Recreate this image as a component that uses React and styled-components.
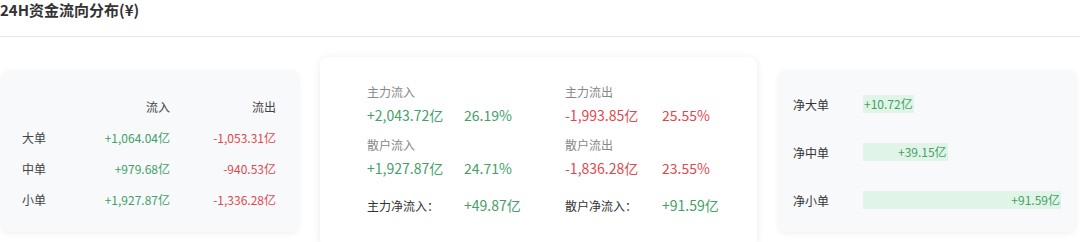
import React from 'react';
import styled, { createGlobalStyle } from 'styled-components';

const GREEN = '#43a066';
const RED = '#e0484e';

const GlobalStyle = createGlobalStyle`
  body {
    margin: 0;
    background: #fff;
    font-family: "Noto Sans CJK SC", "Noto Sans", sans-serif;
    color: #333;
  }
`;

const Page = styled.div`
  width: 1080px;
  height: 242px;
  overflow: hidden;
`;

const Title = styled.h2`
  margin: 0;
  height: 36px;
  font-size: 15px;
  font-weight: 700;
  line-height: 20px;
  color: #333;
  border-bottom: 1px solid #e6e6e6;
`;

const Panels = styled.div`
  display: flex;
  align-items: flex-start;
  gap: 22px;
  padding: 20px 5px 0 2px;
`;

const SideCard = styled.section`
  flex: 0 0 296px;
  height: 161px;
  box-sizing: border-box;
  margin-top: 14px;
  background: #f7f9fb;
  border-radius: 6px;
  box-shadow: 0 1px 6px rgba(0, 0, 0, 0.07);
`;

const OrderTable = styled.div`
  display: grid;
  grid-template-columns: 48px 100px 106px;
  grid-auto-rows: 31px;
  align-items: center;
  padding: 20px 0 0 20px;
  font-size: 12px;
`;

const Cell = styled.span`
  text-align: ${p => (p.$right ? 'right' : 'left')};
  color: ${p => p.$color || '#444'};
`;

const MainCard = styled.section`
  flex: 1 1 0;
  min-width: 0;
  height: 190px;
  box-sizing: border-box;
  padding: 26px 0 0 47px;
  background: #fff;
  border-radius: 8px;
  box-shadow: 0 1px 8px rgba(0, 0, 0, 0.08);
`;

const FlowGrid = styled.div`
  display: grid;
  grid-template-columns: 198px 198px;
`;

const FlowBlock = styled.div`
  margin-bottom: 11px;
`;

const FlowLabel = styled.div`
  font-size: 12px;
  line-height: 18px;
  color: #888;
`;

const FlowValues = styled.div`
  display: flex;
  font-size: 14px;
  line-height: 20px;
  margin-top: 4px;
  color: ${p => p.$color};
`;

const Amount = styled.span`
  width: 97px;
`;

const NetRow = styled.div`
  display: flex;
  align-items: center;
  margin-top: 6px;
  height: 20px;
`;

const NetLabel = styled.span`
  width: 97px;
  font-size: 12px;
  color: #333;
`;

const NetValue = styled.span`
  font-size: 14px;
  color: ${GREEN};
`;

const BarList = styled.div`
  padding: 9px 14px 0 14px;
`;

const BarRow = styled.div`
  display: flex;
  align-items: center;
  height: 48px;
`;

const BarLabel = styled.span`
  width: 70px;
  font-size: 12px;
  color: #333;
`;

const Track = styled.div`
  flex: 1;
`;

const Bar = styled.div`
  min-width: max-content;
  height: 18px;
  line-height: 18px;
  padding: 0 1px;
  box-sizing: border-box;
  text-align: right;
  font-size: 12px;
  color: ${GREEN};
  background: #e0f5e8;
`;

const orders = [
  { name: '大单', inflow: '+1,064.04亿', outflow: '-1,053.31亿' },
  { name: '中单', inflow: '+979.68亿', outflow: '-940.53亿' },
  { name: '小单', inflow: '+1,927.87亿', outflow: '-1,336.28亿' },
];

const flows = [
  { label: '主力流入', amount: '+2,043.72亿', pct: '26.19%', color: GREEN },
  { label: '主力流出', amount: '-1,993.85亿', pct: '25.55%', color: RED },
  { label: '散户流入', amount: '+1,927.87亿', pct: '24.71%', color: GREEN },
  { label: '散户流出', amount: '-1,836.28亿', pct: '23.55%', color: RED },
];

const nets = [
  { label: '净大单', value: 10.72 },
  { label: '净中单', value: 39.15 },
  { label: '净小单', value: 91.59 },
];

const maxNet = Math.max(...nets.map(n => n.value));

const App = () => (
  <Page>
    <GlobalStyle />
    <Title>24H资金流向分布(¥)</Title>
    <Panels>
      <SideCard>
        <OrderTable>
          <span />
          <Cell $right>流入</Cell>
          <Cell $right>流出</Cell>
          {orders.map(o => (
            <React.Fragment key={o.name}>
              <Cell>{o.name}</Cell>
              <Cell $right $color={GREEN}>{o.inflow}</Cell>
              <Cell $right $color={RED}>{o.outflow}</Cell>
            </React.Fragment>
          ))}
        </OrderTable>
      </SideCard>

      <MainCard>
        <FlowGrid>
          {flows.map(f => (
            <FlowBlock key={f.label}>
              <FlowLabel>{f.label}</FlowLabel>
              <FlowValues $color={f.color}>
                <Amount>{f.amount}</Amount>
                <span>{f.pct}</span>
              </FlowValues>
            </FlowBlock>
          ))}
          <NetRow>
            <NetLabel>主力净流入：</NetLabel>
            <NetValue>+49.87亿</NetValue>
          </NetRow>
          <NetRow>
            <NetLabel>散户净流入：</NetLabel>
            <NetValue>+91.59亿</NetValue>
          </NetRow>
        </FlowGrid>
      </MainCard>

      <SideCard>
        <BarList>
          {nets.map(n => (
            <BarRow key={n.label}>
              <BarLabel>{n.label}</BarLabel>
              <Track>
                <Bar style={{ width: `${(n.value / maxNet) * 100}%` }}>
                  +{n.value.toFixed(2)}亿
                </Bar>
              </Track>
            </BarRow>
          ))}
        </BarList>
      </SideCard>
    </Panels>
  </Page>
);

export default App;
